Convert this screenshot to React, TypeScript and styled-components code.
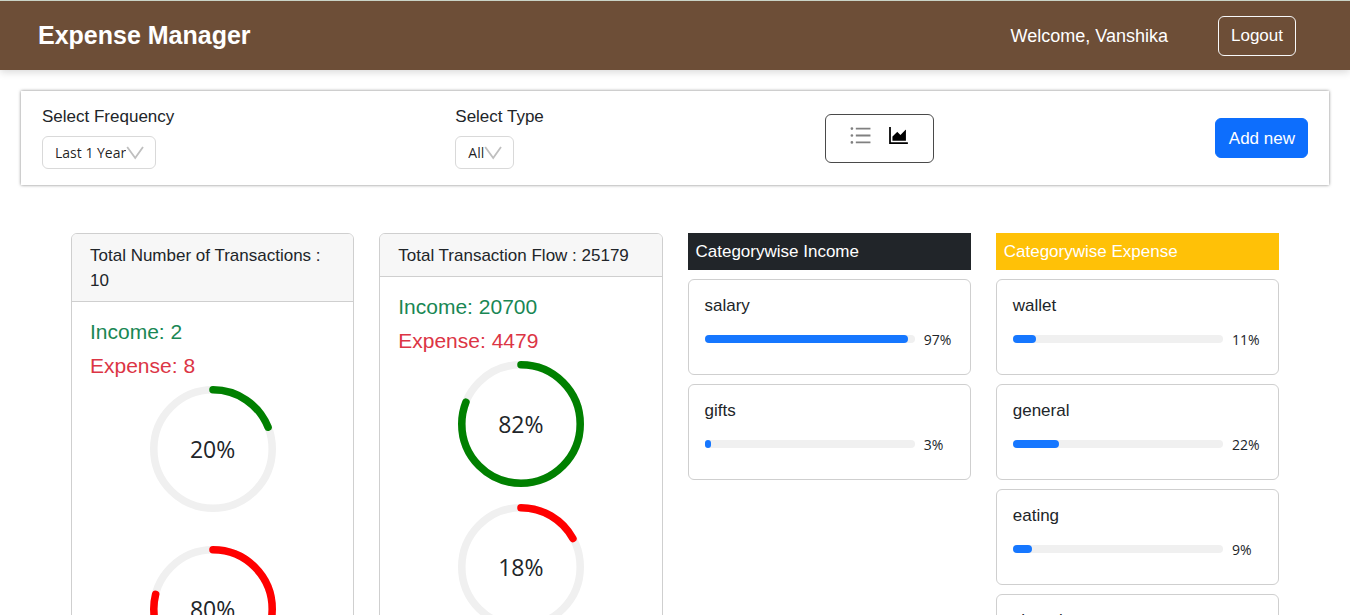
import React from "react";
import styled, { createGlobalStyle } from "styled-components";
import { AiOutlineAreaChart, AiOutlineUnorderedList } from "react-icons/ai";

const sans = `"Liberation Sans", Arial, sans-serif`;
const humanist = `"Segoe UI", "Open Sans", sans-serif`;

const GlobalStyle = createGlobalStyle`
  *, *::before, *::after { box-sizing: border-box; }
  body {
    margin: 0;
    background: #fff;
    color: #212529;
    font-family: ${sans};
    font-size: 17px;
    line-height: 25px;
    scrollbar-width: none;
  }
  button, select { font: inherit; }
  h1, h2, h3, p { margin: 0; font-weight: 400; }
`;

const Header = styled.header`
  display: flex;
  align-items: center;
  justify-content: space-between;
  padding: 15px 54px 14px 38px;
  border-top: 1px solid #c9d3c6;
  background: #6d4e37;
  color: #fff;
  box-shadow: 0 2px 8px rgba(0, 0, 0, 0.16);
`;

const Brand = styled.h1`
  && { font-weight: 700; }
  padding-bottom: 2px;
  font-size: 25px;
  line-height: 32px;
`;

const Account = styled.div`
  display: flex;
  align-items: center;
  gap: 50px;
  font-size: 18px;
`;

const Button = styled.button<{ $solid?: boolean }>`
  height: 40px;
  padding: ${(p) => (p.$solid ? "0 12px 0 13px" : "0 12px 2px")};
  border: 1px solid ${(p) => (p.$solid ? "#0d6efd" : "#f8f9fa")};
  border-radius: 6px;
  background: ${(p) => (p.$solid ? "#0d6efd" : "transparent")};
  color: #fff;
  font-size: 17px;
  cursor: pointer;
`;

const Filters = styled.section`
  display: flex;
  align-items: center;
  justify-content: space-between;
  margin: 21px 21px 0;
  padding: 13px 21px;
  box-shadow: 0 0 3px rgba(0, 0, 0, 0.5);
`;

const Field = styled.div`
  display: flex;
  flex-direction: column;
  align-items: flex-start;
  gap: 7px;
  padding-bottom: 3px;
`;

const SelectBox = styled.div`
  display: grid;
  align-items: center;
  & > * { grid-area: 1 / 1; }
`;

const Select = styled.select`
  appearance: none;
  field-sizing: content;
  height: 33px;
  padding: 0 29px 0 12px;
  border: 1px solid #d9d9d9;
  border-radius: 6px;
  background: #fff;
  color: rgba(0, 0, 0, 0.88);
  font-family: ${humanist};
  font-size: 14px;
`;

const Chevron = styled.svg`
  justify-self: end;
  width: 18px;
  height: 14px;
  margin-right: 12px;
  pointer-events: none;
`;

const ViewSwitch = styled.div`
  display: flex;
  gap: 13px;
  padding: 8px 22px 14px;
  border: 1px solid #4a4a4a;
  border-radius: 6px;
`;

const ViewButton = styled.button<{ $active?: boolean }>`
  display: flex;
  padding: 0;
  border: 0;
  background: none;
  color: ${(p) => (p.$active ? "#000" : "#808080")};
  cursor: pointer;
`;

const Analytics = styled.main`
  display: grid;
  grid-template-columns: repeat(4, minmax(0, 1fr));
  align-items: start;
  gap: 25px;
  padding: 48px 71px 20px;
`;

const SummaryCard = styled.section`
  border: 1px solid #cfcfcf;
  border-radius: 6px;
  overflow: hidden;
`;

const SummaryTitle = styled.h2`
  padding: 9px 18px 8px;
  border-bottom: 1px solid #cfcfcf;
  background: #f7f7f7;
  font-size: 17px;
`;

const SummaryBody = styled.div`
  display: flex;
  flex-direction: column;
  gap: 8px;
  padding: 17px 18px;
`;

const Totals = styled.div`
  display: flex;
  flex-direction: column;
  gap: 9px;
`;

const Total = styled.h3<{ $tone: string }>`
  color: ${(p) => p.$tone};
  font-size: 21px;
`;

const Rings = styled.div<{ $gap: number }>`
  display: flex;
  flex-direction: column;
  align-items: center;
  gap: ${(p) => p.$gap}px;
`;

const RingBox = styled.div`
  display: grid;
  place-items: center;
  font-family: ${humanist};
  font-size: 23px;
  & > * { grid-area: 1 / 1; }
`;

const CategoryColumn = styled.section`
  display: flex;
  flex-direction: column;
  gap: 9px;
`;

const CategoryTitle = styled.h2<{ $tone: string }>`
  padding: 6px 8px;
  background: ${(p) => p.$tone};
  color: #fff;
  font-size: 17px;
`;

const CategoryCard = styled.article`
  padding: 13px 16px 22px;
  border: 1px solid #cfcfcf;
  border-radius: 6px;
`;

const CategoryName = styled.h3`
  font-size: 17px;
`;

const Meter = styled.div`
  display: grid;
  grid-template-columns: 1fr 30px;
  align-items: center;
  gap: 9px;
  margin-top: 8px;
  font-family: ${humanist};
  font-size: 14px;
  line-height: 24px;
`;

const MeterValue = styled.span`
  padding-top: 2px;
`;

const Track = styled.div`
  height: 8px;
  border-radius: 4px;
  background: #f0f0f0;
`;

const Fill = styled.div`
  height: 8px;
  border-radius: 4px;
  background: #1677ff;
`;

function Dropdown({ id, label, options }: { id: string; label: string; options: string[] }) {
  return (
    <Field>
      <label htmlFor={id}>{label}</label>
      <SelectBox>
        <Select id={id} defaultValue={options[0]}>
          {options.map((o) => (
            <option key={o}>{o}</option>
          ))}
        </Select>
        <Chevron viewBox="0 0 18 14" aria-hidden="true">
          <path d="M1.2 1 L9.2 12 L17 1" fill="none" stroke="#bfbfbf" strokeWidth="1.8" />
        </Chevron>
      </SelectBox>
    </Field>
  );
}

function Ring({ percent, color }: { percent: number; color: string }) {
  return (
    <RingBox>
      <svg width="126" height="126" viewBox="0 0 100 100" aria-hidden="true">
        <circle cx="50" cy="50" r="47" fill="none" stroke="#f0f0f0" strokeWidth="6" />
        <circle
          cx="50"
          cy="50"
          r="47"
          fill="none"
          stroke={color}
          strokeWidth="6"
          strokeLinecap="round"
          pathLength={100}
          strokeDasharray={`${percent - 1} 101`}
          transform="rotate(-90 50 50)"
        />
      </svg>
      <span>{percent}%</span>
    </RingBox>
  );
}

type SummaryProps = { title: string; income: number; expense: number; rings: [number, number]; gap: number };

function Summary({ title, income, expense, rings, gap }: SummaryProps) {
  return (
    <SummaryCard>
      <SummaryTitle>{title}</SummaryTitle>
      <SummaryBody>
        <Totals>
          <Total $tone="#198754">Income: {income}</Total>
          <Total $tone="#dc3545">Expense: {expense}</Total>
        </Totals>
        <Rings $gap={gap}>
          <Ring percent={rings[0]} color="green" />
          <Ring percent={rings[1]} color="red" />
        </Rings>
      </SummaryBody>
    </SummaryCard>
  );
}

type Category = { name: string; percent: number };

function Categories({ title, tone, items }: { title: string; tone: string; items: Category[] }) {
  return (
    <CategoryColumn>
      <CategoryTitle $tone={tone}>{title}</CategoryTitle>
      {items.map(({ name, percent }) => (
        <CategoryCard key={name}>
          <CategoryName>{name}</CategoryName>
          <Meter>
            <Track>
              <Fill style={{ width: `${percent}%` }} />
            </Track>
            <MeterValue>{percent}%</MeterValue>
          </Meter>
        </CategoryCard>
      ))}
    </CategoryColumn>
  );
}

const income: Category[] = [
  { name: "salary", percent: 97 },
  { name: "gifts", percent: 3 },
];

const expense: Category[] = [
  { name: "wallet", percent: 11 },
  { name: "general", percent: 22 },
  { name: "eating", percent: 9 },
  { name: "shopping", percent: 18 },
];

export default function App() {
  return (
    <>
      <GlobalStyle />
      <Header>
        <Brand>Expense Manager</Brand>
        <Account>
          <span>Welcome, Vanshika</span>
          <Button type="button">Logout</Button>
        </Account>
      </Header>
      <Filters>
        <Dropdown id="frequency" label="Select Frequency" options={["Last 1 Year", "Last 1 Month", "Last 1 Week"]} />
        <Dropdown id="type" label="Select Type" options={["All", "Income", "Expense"]} />
        <ViewSwitch>
          <ViewButton type="button" aria-label="List view">
            <AiOutlineUnorderedList size={25} />
          </ViewButton>
          <ViewButton type="button" aria-label="Chart view" $active>
            <AiOutlineAreaChart size={25} />
          </ViewButton>
        </ViewSwitch>
        <Button type="button" $solid>
          Add new
        </Button>
      </Filters>
      <Analytics>
        <Summary title="Total Number of Transactions : 10" income={2} expense={8} rings={[20, 80]} gap={34} />
        <Summary title="Total Transaction Flow : 25179" income={20700} expense={4479} rings={[82, 18]} gap={17} />
        <Categories title="Categorywise Income" tone="#212529" items={income} />
        <Categories title="Categorywise Expense" tone="#ffc107" items={expense} />
      </Analytics>
    </>
  );
}
